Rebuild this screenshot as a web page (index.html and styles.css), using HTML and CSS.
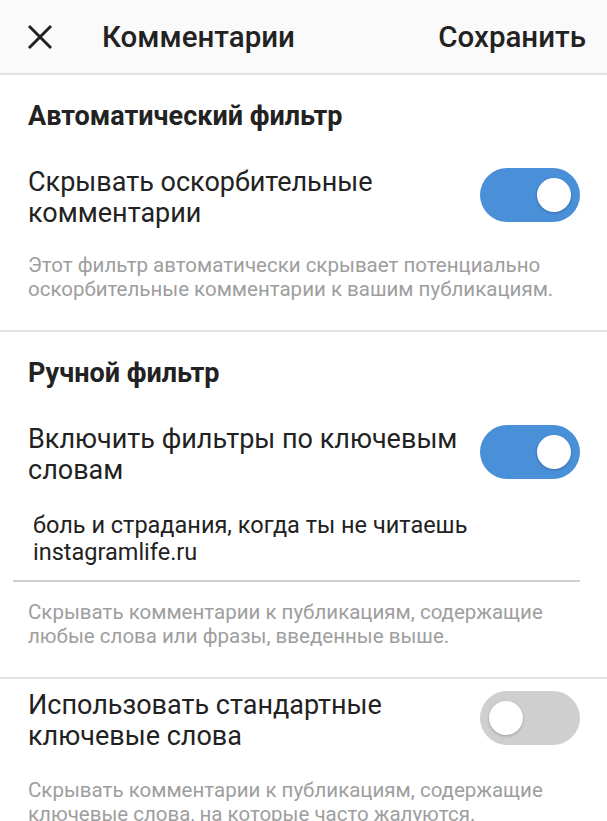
FILE: index.html
```html
<!DOCTYPE html>
<html lang="ru">
<head>
<meta charset="utf-8">
<link rel="stylesheet" href="styles.css">
</head>
<body>
<header class="topbar">
  <svg class="close" width="26" height="26" viewBox="0 0 26 26"><path d="M2 2L24 24M24 2L2 24" stroke="#222" stroke-width="3" fill="none"/></svg>
  <div class="title">Комментарии</div>
  <div class="save">Сохранить</div>
</header>
<main>
  <section class="section">
    <h2 class="sec-title">Автоматический фильтр</h2>
    <div class="row">
      <div class="row-text">Скрывать оскорбительные комментарии</div>
      <div class="toggle on"><span class="knob"></span></div>
    </div>
    <p class="desc">Этот фильтр автоматически скрывает потенциально оскорбительные комментарии к вашим публикациям.</p>
  </section>
  <section class="section">
    <h2 class="sec-title">Ручной фильтр</h2>
    <div class="row">
      <div class="row-text">Включить фильтры по ключевым словам</div>
      <div class="toggle on"><span class="knob"></span></div>
    </div>
    <div class="input">боль и страдания, когда ты не читаешь instagramlife.ru</div>
    <p class="desc d2">Скрывать комментарии к публикациям, содержащие любые слова или фразы, введенные выше.</p>
  </section>
  <section class="section last">
    <div class="row r3">
      <div class="row-text">Использовать стандартные ключевые слова</div>
      <div class="toggle off"><span class="knob"></span></div>
    </div>
    <p class="desc d3">Скрывать комментарии к публикациям, содержащие ключевые слова, на которые часто жалуются.</p>
  </section>
</main>
</body>
</html>
```

FILE: styles.css
```css
html, body {
  margin: 0;
  padding: 0;
  background: #fff;
  font-family: Roboto, "Noto Sans", sans-serif;
  color: #212121;
  overflow: hidden;
}
.topbar {
  height: 73px;
  background: #fafafa;
  border-bottom: 2px solid #e3e3e3;
  display: flex;
  align-items: center;
  padding: 0 21px 0 27px;
}
.close {
  display: block;
  flex: none;
}
.title {
  margin-left: 49px;
  font-size: 29.5px;
  font-weight: 500;
  flex: 1;
  color: #222;
}
.save {
  font-size: 29.5px;
  font-weight: 500;
  color: #222;
}
.section {
  border-bottom: 2px solid #e3e3e3;
  padding: 0 27px 0 28px;
}
.section.last {
  border-bottom: none;
}
.sec-title {
  margin: 0;
  padding-top: 25px;
  font-size: 27px;
  font-weight: 700;
  line-height: 32px;
  color: #222;
}
.row {
  display: flex;
  align-items: center;
  justify-content: space-between;
  margin-top: 35px;
}
.row.r3 {
  margin-top: 11px;
}
.row-text {
  font-size: 27px;
  line-height: 31px;
  width: 440px;
  color: #222;
}
.toggle {
  flex: none;
  width: 100px;
  height: 54px;
  border-radius: 27px;
  position: relative;
  margin-top: -7px;
}
.toggle.on {
  background: #4a90d9;
}
.toggle.off {
  background: #cfcfcf;
}
.knob {
  position: absolute;
  top: 10px;
  width: 34px;
  height: 34px;
  border-radius: 50%;
  background: #fff;
  box-shadow: 0 1px 3px rgba(0,0,0,0.25);
}
.toggle.on .knob {
  right: 9px;
}
.toggle.off .knob {
  left: 9px;
}
.desc {
  margin: 0;
  padding: 24px 0 29px;
  font-size: 20.5px;
  line-height: 24px;
  color: #9e9e9e;
}
.input {
  margin: 26px 0 0 -15px;
  padding: 0 0 14px 20px;
  border-bottom: 2px solid #cfcfcf;
  font-size: 23.5px;
  line-height: 27px;
  color: #222;
}
.desc.d2 {
  padding-top: 18px;
  padding-bottom: 29px;
}
.desc.d3 {
  padding-top: 26px;
}
```
